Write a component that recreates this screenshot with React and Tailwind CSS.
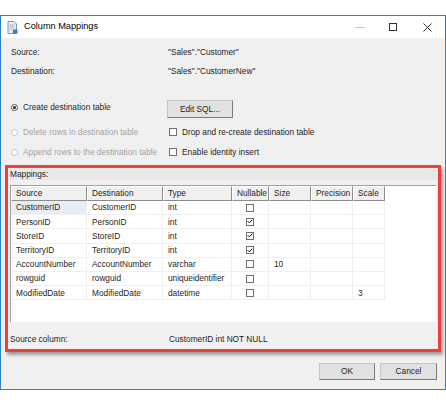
import { Check } from 'lucide-react';

const font = { fontFamily: '"Liberation Sans", Arial, sans-serif' };

const columns = [
  { key: 'src', label: 'Source', w: 'w-[76px]' },
  { key: 'dst', label: 'Destination', w: 'w-[76px]' },
  { key: 'type', label: 'Type', w: 'w-[69px]' },
  { key: 'nul', label: 'Nullable', w: 'w-[37px]' },
  { key: 'size', label: 'Size', w: 'w-[42px]' },
  { key: 'prec', label: 'Precision', w: 'w-[42px]' },
  { key: 'scale', label: 'Scale', w: 'w-[32px]' }
];

const rows = [
  { src: 'CustomerID', dst: 'CustomerID', type: 'int', nul: false },
  { src: 'PersonID', dst: 'PersonID', type: 'int', nul: true },
  { src: 'StoreID', dst: 'StoreID', type: 'int', nul: true },
  { src: 'TerritoryID', dst: 'TerritoryID', type: 'int', nul: true },
  { src: 'AccountNumber', dst: 'AccountNumber', type: 'varchar', nul: false, size: '10' },
  { src: 'rowguid', dst: 'rowguid', type: 'uniqueidentifier', nul: false },
  { src: 'ModifiedDate', dst: 'ModifiedDate', type: 'datetime', nul: false, scale: '3' }
];

const CheckBox = ({ checked }) => (
  <span className="w-[8px] h-[8px] border border-[#707070] bg-white flex items-center justify-center">
    {checked && <Check className="w-[7px] h-[7px] text-black" strokeWidth={4} />}
  </span>
);

const Radio = ({ checked, disabled }) => (
  <span
    className={`w-[7px] h-[7px] rounded-full border flex items-center justify-center ${
      disabled ? 'border-[#c4c4c4]' : 'border-[#555]'
    } bg-white`}
  >
    {checked && <span className="w-[3px] h-[3px] rounded-full bg-[#222]" />}
  </span>
);

const Button = ({ children, className }) => (
  <div
    className={`h-[17px] flex items-center justify-center bg-[#e1e1e1] border border-[#c4c4c4] border-r-[#7a7a7a] border-b-[#7a7a7a] text-[#1e1e1e] ${className}`}
  >
    {children}
  </div>
);

const App = () => {
  return (
    <div className="w-[446px] h-[405px] bg-white pt-[15px] text-[8.3px] text-[#1e1e1e]" style={font}>
      <div className="w-[446px] h-[375px] border border-[#2d7fd2] bg-[#f0f0f0] flex flex-col">
        {/* Title bar */}
        <div className="h-[22px] bg-white flex items-center shrink-0">
          <svg className="ml-[6px] w-[11px] h-[13px]" viewBox="0 0 11 13">
            <path d="M1 0.5h6l2.5 2.5v9.5h-8.5z" fill="#e4ebf3" stroke="#8496b0" />
            <path d="M2.5 4h5M2.5 6h5M2.5 8h3" stroke="#a9b6c8" />
            <rect x="6" y="8.5" width="4.5" height="4" fill="#2f7fd0" />
          </svg>
          <span className="ml-[6px] text-[9.2px] text-black">Column Mappings</span>
          <div className="ml-auto flex items-center h-full">
            <span className="w-[10px] h-px bg-[#c8c8c8] mr-[24px]" />
            <span className="w-[8px] h-[8px] border border-[#333] mr-[26px]" />
            <svg className="w-[9px] h-[9px] mr-[13px]" viewBox="0 0 9 9">
              <path d="M0.5 0.5l8 8M8.5 0.5l-8 8" stroke="#333" strokeWidth="1" />
            </svg>
          </div>
        </div>

        {/* Body */}
        <div className="flex-1 flex flex-col">
          <div className="mt-[5px] h-[19px] flex items-center pl-[10px]">
            <span className="w-[157px]">Source:</span>
            <span>"Sales"."Customer"</span>
          </div>
          <div className="h-[19px] flex items-center pl-[10px]">
            <span className="w-[157px]">Destination:</span>
            <span>"Sales"."CustomerNew"</span>
          </div>

          <div className="mt-[17px] flex items-start pl-[10px]">
            <div className="w-[156px] h-[18px] flex items-center gap-[5px]">
              <Radio checked />
              <span>Create destination table</span>
            </div>
            <Button className="mt-[2px] w-[66px] h-[18px]">Edit SQL...</Button>
          </div>
          <div className="mt-[5px] h-[18px] flex items-center pl-[10px]">
            <div className="w-[158px] flex items-center gap-[5px] text-[#a3a3a3]">
              <Radio disabled />
              <span>Delete rows in destination table</span>
            </div>
            <CheckBox />
            <span className="ml-[5px]">Drop and re-create destination table</span>
          </div>
          <div className="mt-[2px] h-[18px] flex items-center pl-[10px]">
            <div className="w-[158px] flex items-center gap-[5px] text-[#a3a3a3] whitespace-nowrap">
              <Radio disabled />
              <span>Append rows to the destination table</span>
            </div>
            <CheckBox />
            <span className="ml-[5px]">Enable identity insert</span>
          </div>

          {/* Mappings (highlighted) */}
          <div className="mt-[4px] ml-[4px] w-[436px] h-[187px] border-[3px] border-[#ee3f3f] shadow-[2px_3px_3px_rgba(0,0,0,0.35)] flex flex-col">
            <div className="h-[12px] flex items-center pl-[2px] bg-[#e9e9e9]">Mappings:</div>
            <div className="mt-[5px] ml-[2px] w-[426px] h-[137px] bg-white border-l border-t border-[#a0a0a0] flex flex-col">
              <div className="h-[15px] flex shrink-0">
                {columns.map((c) => (
                  <div
                    key={c.key}
                    className={`${c.w} h-full flex items-center pl-[4px] bg-[#f0f0f0] border-t border-l border-white border-r border-b border-r-[#8c8c8c] border-b-[#8c8c8c]`}
                  >
                    {c.label}
                  </div>
                ))}
              </div>
              {rows.map((r, i) => (
                <div key={r.src} className="h-[14.2px] flex shrink-0">
                  {columns.map((c) => (
                    <div
                      key={c.key}
                      className={`${c.w} h-full flex items-center border-r border-b border-[#f0f0f0] ${
                        c.key === 'nul' ? 'justify-center' : 'pl-[5px]'
                      } ${i === 0 && c.key === 'src' ? 'bg-[#e7edf3] border-[#d4dbe3]' : ''}`}
                    >
                      {c.key === 'nul' ? <CheckBox checked={r.nul} /> : r[c.key]}
                    </div>
                  ))}
                </div>
              ))}
            </div>
            <div className="mt-[10px] h-[14px] flex items-center pl-[2px]">
              <span className="w-[159px]">Source column:</span>
              <span>CustomerID int NOT NULL</span>
            </div>
          </div>

          <div className="mt-[11px] flex justify-end gap-[5px] pr-[8px]">
            <Button className="w-[56px]">OK</Button>
            <Button className="w-[57px]">Cancel</Button>
          </div>
        </div>
      </div>
    </div>
  );
};

export default App;
